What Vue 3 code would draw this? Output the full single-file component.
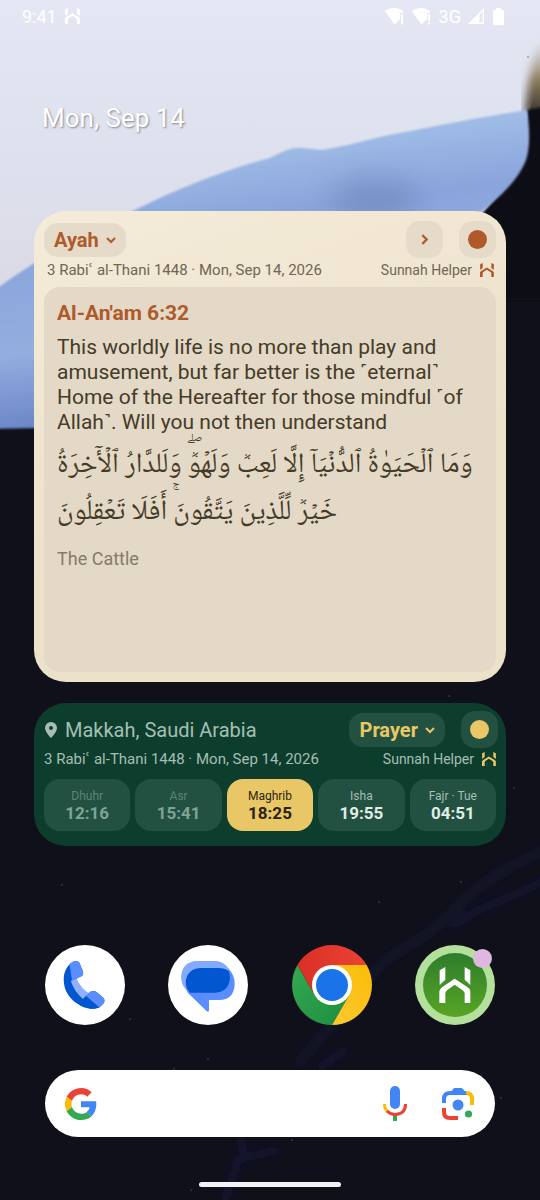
<template>
  <div class="home">
    <svg class="wallpaper" viewBox="0 0 540 1200" preserveAspectRatio="xMidYMin slice" aria-hidden="true">
      <defs>
        <linearGradient id="sky" x1="0" y1="0" x2="0" y2="1">
          <stop offset="0" stop-color="#e5e8f4" />
          <stop offset="0.5" stop-color="#dde1ed" />
          <stop offset="1" stop-color="#dbd8e4" />
        </linearGradient>
        <linearGradient id="petal" gradientUnits="userSpaceOnUse" x1="250" y1="120" x2="290" y2="430">
          <stop offset="0" stop-color="#a9c5ea" />
          <stop offset="0.3" stop-color="#8aa5dc" />
          <stop offset="0.65" stop-color="#93addf" />
          <stop offset="1" stop-color="#5974bd" />
        </linearGradient>
        <linearGradient id="rim" x1="0" y1="0" x2="0" y2="1">
          <stop offset="0" stop-color="#cfc9c4" stop-opacity="0" />
          <stop offset="0.5" stop-color="#8b7a5c" />
          <stop offset="1" stop-color="#15141a" />
        </linearGradient>
        <filter id="soft1"><feGaussianBlur stdDeviation="1" /></filter>
        <filter id="soft4"><feGaussianBlur stdDeviation="4" /></filter>
        <filter id="soft16" x="-50%" y="-50%" width="200%" height="200%"><feGaussianBlur stdDeviation="14" /></filter>
      </defs>
      <rect width="540" height="1200" fill="#0f1019" />
      <path d="M-10 -10H550V60L529 112L500 240L0 330H-10Z" fill="url(#sky)" />
      <path d="M560 30L536 50Q526 80 525 115L560 130Z" fill="url(#rim)" filter="url(#soft4)" />
      <path d="M560 104L527 110V160L480 216V300H560Z" fill="#0f1019" filter="url(#soft1)" />
      <path
        d="M-10 294C30 262 90 230 135 210C180 187 230 168 270 158C283 152 290 147 303 148L322 150C350 146 370 138 400 133C440 125 480 117 527 110C530 130 530 148 526 160C518 180 502 195 480 213L380 330L40 428L-10 429Z"
        fill="url(#petal)" filter="url(#soft1)"
      />
      <ellipse cx="375" cy="200" rx="45" ry="24" fill="#5d77ab" opacity="0.4" filter="url(#soft16)" />
      <g fill="none" stroke="#24247a" stroke-linecap="round" filter="url(#soft4)">
        <path d="M545 850C500 870 470 890 450 915C420 945 390 950 372 975C350 1010 325 1030 300 1062" stroke-width="12" opacity="0.14" />
        <path d="M545 880C510 900 480 905 455 925M345 1050L320 1068M240 1138L245 1158L275 1150M238 1160L225 1200" stroke-width="8" opacity="0.25" />
      </g>
      <g fill="#5a5c72">
        <circle v-for="star in stars" :key="star.join()" :cx="star[0]" :cy="star[1]" r="0.7" />
      </g>
    </svg>

    <header class="status">
      <span class="clock">9:41</span>
      <svg class="status-logo" viewBox="0 0 94 108" preserveAspectRatio="none" aria-hidden="true"><path :d="logoPath" /></svg>
      <div class="status-icons">
        <svg width="20" height="18" viewBox="0 0 20 18" aria-hidden="true">
          <path d="M0 4.200C5 0 13 0 18 4.200V6H15V12L9.500 17.500ZM16 7H18V17.500H16Z" />
        </svg>
        <svg width="20" height="18" viewBox="0 0 20 18" aria-hidden="true">
          <path d="M0 4.200C5 0 13 0 18 4.200V6H15V12L9.500 17.500ZM16 7H18V14H16ZM16 15H18V17.500H16Z" />
        </svg>
        <span class="network">3G</span>
        <svg class="signal" width="16" height="16" viewBox="0 0 16 16" aria-hidden="true">
          <path fill-rule="evenodd" d="M0 16L16 0V16ZM11.500 6.500V14.500H14.500V3.500Z" />
        </svg>
        <svg width="11" height="17" viewBox="0 0 11 17" aria-hidden="true">
          <path d="M3 0H8V2H10Q11 2 11 3V16Q11 17 10 17H1Q0 17 0 16V3Q0 2 1 2H3Z" />
        </svg>
      </div>
    </header>

    <h1 class="today">Mon, Sep 14</h1>

    <main class="widgets">
      <section class="widget ayah">
        <div class="bar">
          <label class="mode">
            <select v-model="ayahMode" aria-label="Widget content">
              <option>Ayah</option>
            </select>
            <svg class="chevron" viewBox="0 0 10 6" aria-hidden="true"><path d="M1 1L5 5L9 1" /></svg>
          </label>
          <div class="actions">
            <button class="square" type="button" aria-label="Next ayah">
              <svg class="arrow" viewBox="0 0 6 10" aria-hidden="true"><path d="M1 1L5 5L1 9" /></svg>
            </button>
            <button class="square" type="button" aria-label="Theme"><span class="dot" /></button>
          </div>
        </div>
        <div class="meta">
          <span>{{ dates }}</span>
          <span class="brand">
            Sunnah Helper
            <svg viewBox="0 0 94 108" preserveAspectRatio="none" aria-hidden="true"><path :d="logoPath" /></svg>
          </span>
        </div>
        <article class="verse">
          <h2>Al-An'am 6:32</h2>
          <p class="translation">
            This worldly life is no more than play and amusement, but far better is the ˹eternal˺ Home of the
            Hereafter for those mindful ˹of Allah˺. Will you not then understand
          </p>
          <p class="arabic" lang="ar" dir="rtl">{{ arabic }}</p>
          <p class="surah">The Cattle</p>
        </article>
      </section>

      <section class="widget prayer">
        <div class="bar">
          <div class="place">
            <svg viewBox="0 0 12 16" aria-hidden="true">
              <path fill-rule="evenodd" d="M6 0A6 6 0 0 1 12 6C12 10 6 16 6 16S0 10 0 6A6 6 0 0 1 6 0ZM6 4A2 2 0 1 0 6 8A2 2 0 1 0 6 4Z" />
            </svg>
            <span>Makkah, Saudi Arabia</span>
          </div>
          <div class="actions">
            <label class="mode">
              <select v-model="prayerMode" aria-label="Widget content">
                <option>Prayer</option>
              </select>
              <svg class="chevron" viewBox="0 0 10 6" aria-hidden="true"><path d="M1 1L5 5L9 1" /></svg>
            </label>
            <button class="square" type="button" aria-label="Theme"><span class="dot" /></button>
          </div>
        </div>
        <div class="meta">
          <span>{{ dates }}</span>
          <span class="brand">
            Sunnah Helper
            <svg viewBox="0 0 94 108" preserveAspectRatio="none" aria-hidden="true"><path :d="logoPath" /></svg>
          </span>
        </div>
        <ul class="times">
          <li v-for="p in prayers" :key="p.name" :class="p.state">
            <span>{{ p.name }}</span>
            <strong>{{ p.time }}</strong>
          </li>
        </ul>
      </section>
    </main>

    <nav class="dock">
      <a href="#phone" aria-label="Phone">
        <svg viewBox="0 0 80 80" aria-hidden="true">
          <circle cx="40" cy="40" r="40" fill="#fff" />
          <path d="M26 36L31 32Q35 43 45 49L38 55Q29 48 26 36Z" fill="#8fb2ff" />
          <path d="M26 18C29 15.500 33 15.500 34.500 18L38 26.500C38.500 29 38 30.500 36 31.500L26 36C28 43 32 49 38 54L45 47C47 45.500 49.500 45.500 51.500 47L58 52.500C60 54.500 60 57 58 59C53 65 44 65 36 61C25 55 18.500 46 18.700 34C18.900 27 21.500 22 26 18Z" fill="#0057d0" />
          <path d="M24.500 19.500C28 15.500 33 15 34.500 18L38 26.500C38.500 29 38 30.500 36 31.500L27 35.500Z" fill="#5a8dff" />
          <path d="M38 54L45 47C47 45.500 49.500 45.500 51.500 47L58 52.500C60 54.500 60 57 58 59L54.500 62.500Z" fill="#5a8dff" />
          <path d="M38 54L41 51L54.500 62.500Q49 64.500 44 63.500Z" fill="#0057d0" />
        </svg>
      </a>
      <a href="#messages" aria-label="Messages">
        <svg viewBox="0 0 80 80" aria-hidden="true">
          <circle cx="40" cy="40" r="40" fill="#fff" />
          <path d="M29 16H46Q62 17 62 32Q61 48 46 48H22Q13.300 42 13.300 32Q14 17 29 16Z" fill="#84aaff" />
          <path d="M34 23H60Q66.700 30 66.700 39Q66 55 51 55H41V65Q41 68 38.500 66L20 48Q17.500 44 17.700 39Q18 24 34 23Z" fill="#5a8eff" />
          <path d="M29 16H46Q56 16 60 24V27H30L20 32L18 44Q13.300 40 13.300 32Q14 17 29 16Z" fill="#84aaff" />
          <path d="M32 23H50Q57 23 60.500 26Q62 29 62 33Q61 47 47 47.700H22Q17.700 43 17.700 37Q19 24 32 23Z" fill="#0057d0" />
        </svg>
      </a>
      <a href="#chrome" aria-label="Chrome">
        <svg viewBox="0 0 80 80" aria-hidden="true">
          <defs>
            <linearGradient id="red" x1="0" y1="0" x2="1" y2="0"><stop offset="0" stop-color="#d93025" /><stop offset="1" stop-color="#ea4335" /></linearGradient>
            <linearGradient id="green" x1="0" y1="0" x2="1" y2="1"><stop offset="0" stop-color="#34a853" /><stop offset="1" stop-color="#1e8e3e" /></linearGradient>
            <linearGradient id="yellow" x1="0" y1="1" x2="1" y2="0"><stop offset="0" stop-color="#fcc934" /><stop offset="1" stop-color="#fbbc04" /></linearGradient>
          </defs>
          <path d="M5.400 20A40 40 0 0 0 40 80L57.300 50L40 40L22.700 50Z" fill="url(#green)" />
          <path d="M5.400 20A40 40 0 0 1 74.600 20H40V40L22.700 50Z" fill="url(#red)" />
          <path d="M74.600 20A40 40 0 0 1 40 80L57.300 50L40 20Z" fill="url(#yellow)" />
          <circle cx="40" cy="40" r="20" fill="#fff" />
          <circle cx="40" cy="40" r="16" fill="#1a73e8" />
        </svg>
      </a>
      <a href="#sunnah-helper" aria-label="Sunnah Helper">
        <svg viewBox="0 0 80 80" aria-hidden="true">
          <defs>
            <linearGradient id="leaf" x1="0" y1="0" x2="0" y2="1"><stop offset="0" stop-color="#2d7d2c" /><stop offset="1" stop-color="#58a524" /></linearGradient>
          </defs>
          <circle cx="40" cy="40" r="40" fill="#b4e09d" />
          <circle cx="40" cy="40" r="32" fill="url(#leaf)" />
          <svg class="app-logo" x="24" y="22" viewBox="0 0 94 108"><path :d="logoPath" fill="#fff" /></svg>
        </svg>
        <span class="badge" />
      </a>
    </nav>

    <form class="search" role="search" @submit.prevent>
      <svg width="32" height="32" viewBox="0 0 48 48" aria-hidden="true">
        <path fill="#ea4335" d="M24 9.500c3.540 0 6.710 1.220 9.210 3.600l6.850-6.850C35.900 2.380 30.470 0 24 0 14.620 0 6.510 5.380 2.560 13.220l7.980 6.190C12.430 13.720 17.740 9.500 24 9.500z" />
        <path fill="#4285f4" d="M46.980 24.550c0-1.570-.15-3.090-.38-4.550H24v9.020h12.940c-.58 2.960-2.260 5.480-4.780 7.180l7.730 6c4.510-4.180 7.090-10.360 7.090-17.650z" />
        <path fill="#fbbc05" d="M10.530 28.590c-.48-1.450-.76-2.990-.76-4.590s.27-3.140.76-4.590l-7.980-6.190C.92 16.460 0 20.120 0 24c0 3.880.92 7.540 2.560 10.780l7.970-6.190z" />
        <path fill="#34a853" d="M24 48c6.480 0 11.930-2.130 15.890-5.810l-7.730-6c-2.150 1.450-4.920 2.300-8.160 2.300-6.260 0-11.570-4.220-13.470-9.910l-7.980 6.190C6.510 42.620 14.620 48 24 48z" />
      </svg>
      <input v-model="query" type="text" aria-label="Search" />
      <button type="button" aria-label="Voice search">
        <svg width="26" height="36" viewBox="0 0 26 36" aria-hidden="true">
          <rect x="8" y="0" width="10" height="23" rx="5" fill="#4285f4" />
          <path d="M11 29H15V35H11Z" fill="#34a853" />
          <g fill="none" stroke-width="3">
            <path d="M2.500 18Q2.500 23 6 26" stroke="#fbbc04" />
            <path d="M5 25Q8.500 28.500 13 28.500Q23.500 28 23.500 18" stroke="#ea4335" />
          </g>
        </svg>
      </button>
      <button type="button" aria-label="Lens">
        <svg width="34" height="34" viewBox="0 0 34 34" aria-hidden="true">
          <g fill="none" stroke-width="4">
            <path d="M3 16V12Q3 6 9 6H25" stroke="#4285f4" />
            <path d="M25 6Q31 6 31 12V18" stroke="#fbbc04" />
            <path d="M3 21V25Q3 31 9 31H17" stroke="#ea4335" />
          </g>
          <path d="M9 7L12 2Q13 1 14 1H20Q21 1 22 2L26 8H9Z" fill="#4285f4" />
          <circle cx="17" cy="18" r="5.500" fill="#4285f4" />
          <circle cx="27.500" cy="27" r="3.600" fill="#34a853" />
        </svg>
      </button>
    </form>

    <div class="handle" />
  </div>
</template>

<script setup>
import { ref } from 'vue'

const ayahMode = ref('Ayah')
const prayerMode = ref('Prayer')
const query = ref('')

const dates = '3 Rabiʿ al-Thani 1448 · Mon, Sep 14, 2026'
const arabic = 'وَمَا ٱلۡحَيَوٰةُ ٱلدُّنۡيَآ إِلَّا لَعِبٞ وَلَهۡوٞۖ وَلَلدَّارُ ٱلۡأٓخِرَةُ خَيۡرٞ لِّلَّذِينَ يَتَّقُونَۚ أَفَلَا تَعۡقِلُونَ'

const prayers = [
  { name: 'Dhuhr', time: '12:16', state: 'past' },
  { name: 'Asr', time: '15:41', state: 'past' },
  { name: 'Maghrib', time: '18:25', state: 'current' },
  { name: 'Isha', time: '19:55', state: 'next' },
  { name: 'Fajr · Tue', time: '04:51', state: 'next' },
]

// Two minarets over an arch
const logoPath = 'M1 10L18 0V38L1 54ZM93 10L76 0V38L93 54ZM0 108V73Q2 66 8 61L46 35L85 61Q92 66 93 73V108H76V79Q75 74 70 70L46 53L23 70Q19 74 18 79V108Z'

const stars = [
  [528, 57], [449, 696], [62, 885], [379, 902], [461, 882], [514, 788],
  [130, 1019], [174, 1069], [208, 1059], [501, 1098], [191, 1190], [292, 1140],
]
</script>

<style>
body {
  margin: 0;
  background: #0f1019;
}
</style>

<style scoped>
.home {
  position: relative;
  z-index: 0;
  box-sizing: border-box;
  min-height: 100vh;
  padding: 0 34px 13px;
  display: flex;
  flex-direction: column;
  overflow: hidden;
  font-family: Roboto, "DejaVu Sans", sans-serif;
}

.wallpaper {
  position: absolute;
  inset: 0;
  z-index: -1;
  width: 100%;
  height: 100%;
}

h1, h2, p, ul { margin: 0; padding: 0; }

button, select, input {
  margin: 0;
  padding: 0;
  border: 0;
  background: none;
  color: inherit;
  font: inherit;
}
button, select { cursor: pointer; }

.status {
  display: flex;
  align-items: center;
  height: 32px;
  margin: 0 -12px;
  color: #fff;
  font-size: 18px;
}
.status svg { fill: #fff; }
.status-logo { width: 15px; height: 16px; margin-left: 8px; }
.status-icons {
  display: flex;
  align-items: center;
  gap: 7px;
  margin: 0 14px 0 auto;
}
.signal { margin-right: 2px; }

.today {
  margin: 69px 8px 0;
  color: #fff;
  font-size: 26px;
  font-weight: 400;
  line-height: 34px;
  text-shadow: 1px 1px 2px rgba(0, 0, 0, 0.4);
}

.widgets {
  display: flex;
  flex-direction: column;
  gap: 21px;
  margin-top: 76px;
}

.widget { border-radius: 32px; }
.ayah {
  display: flex;
  flex-direction: column;
  box-sizing: border-box;
  min-height: 471px;
  padding: 10px;
  background: linear-gradient(160deg, #f4ebd9, #ece1c9 60%);
  color: #6f6653;
}
.prayer {
  padding: 8px 10px 15px;
  background: #0d3d2d;
  color: #a5bfb4;
}

.bar {
  display: flex;
  align-items: center;
  justify-content: space-between;
}
.actions {
  display: flex;
  align-items: center;
  gap: 16px;
}
.prayer .actions { margin-right: -2px; }

.mode {
  display: flex;
  align-items: center;
  gap: 7px;
  height: 34px;
  padding: 0 10px;
  border-radius: 14px;
  font-size: 20px;
  font-weight: 700;
}
.mode select {
  appearance: none;
  field-sizing: content;
  outline: none;
}
.chevron { width: 10px; height: 6px; }
.arrow { width: 7px; height: 11px; }
.chevron, .arrow {
  fill: none;
  stroke: currentColor;
  stroke-width: 2;
  overflow: visible;
}

.square {
  display: flex;
  align-items: center;
  justify-content: center;
  width: 37px;
  height: 37px;
  border-radius: 14px;
}
.dot {
  width: 19px;
  height: 19px;
  border-radius: 50%;
  background: currentColor;
}

.ayah .mode, .ayah .square {
  background: #e5dbc8;
  color: #ae5a2b;
}
.prayer .mode, .prayer .square {
  background: #225041;
  color: #e9c767;
}

.meta {
  display: flex;
  align-items: center;
  justify-content: space-between;
  height: 24px;
  font-size: 15px;
}
.ayah .meta { padding: 0 2px 5px 3px; }
.prayer .meta { height: 22px; padding-bottom: 9px; }
.brand {
  display: flex;
  align-items: center;
  gap: 8px;
  font-size: 14px;
}
.brand svg { width: 14px; height: 14px; }
.ayah .brand svg { fill: #ae5a2b; }
.prayer .brand svg { fill: #e9c767; }

.verse {
  flex: 1;
  padding: 14px 13px;
  border-radius: 16px;
  background: #e3d9c6;
}
.verse h2 {
  color: #ae5a2b;
  font-size: 21px;
  font-weight: 700;
  line-height: 24px;
}
.translation {
  margin-top: 10px;
  color: #453b28;
  font-size: 21px;
  line-height: 25px;
}
.arabic {
  margin-top: 8px;
  color: #453b28;
  font-family: "Noto Naskh Arabic", "Noto Sans Arabic", "DejaVu Sans", sans-serif;
  font-size: 28px;
  line-height: 47px;
  text-align: left;
}
.surah {
  margin-top: 11px;
  color: #857b69;
  font-size: 18px;
  line-height: 22px;
}

.place {
  display: flex;
  align-items: center;
  gap: 8px;
  padding-left: 1px;
  font-size: 20px;
}
.place svg { width: 12px; height: 16px; fill: #a5bfb4; }

.times {
  display: grid;
  grid-template-columns: repeat(5, 1fr);
  gap: 5px;
  list-style: none;
}
.times li {
  display: flex;
  flex-direction: column;
  align-items: center;
  justify-content: center;
  height: 52px;
  border-radius: 16px;
  background: #225041;
  font-size: 12px;
  line-height: 16px;
}
.times strong {
  font-size: 17px;
  line-height: 18px;
}
.past { color: #5c8477; }
.past strong { color: #7ea397; }
.times .current { background: #e9c767; color: #2b2410; }
.next strong { color: #e0ece6; }

.dock {
  display: flex;
  justify-content: space-between;
  margin: 99px 11px 0;
}
.dock a { position: relative; width: 80px; height: 80px; }
.dock svg { display: block; width: 100%; height: 100%; }
.dock .app-logo { width: 32px; height: 36px; }
.badge {
  position: absolute;
  top: 4px;
  right: 3px;
  width: 19px;
  height: 19px;
  border-radius: 50%;
  background: #e0b8df;
}

.search {
  display: flex;
  align-items: center;
  height: 67px;
  margin: 45px 11px 0;
  padding: 0 20px;
  border-radius: 34px;
  background: #fff;
}
.search input {
  flex: 1;
  min-width: 0;
  margin: 0 12px;
  color: #202124;
  font-size: 18px;
  outline: none;
}
.search button { display: flex; }
.search button + button { margin-left: 33px; }

.handle {
  width: 142px;
  height: 5px;
  margin: auto auto 0;
  border-radius: 3px;
  background: #f2f2f4;
}
</style>
